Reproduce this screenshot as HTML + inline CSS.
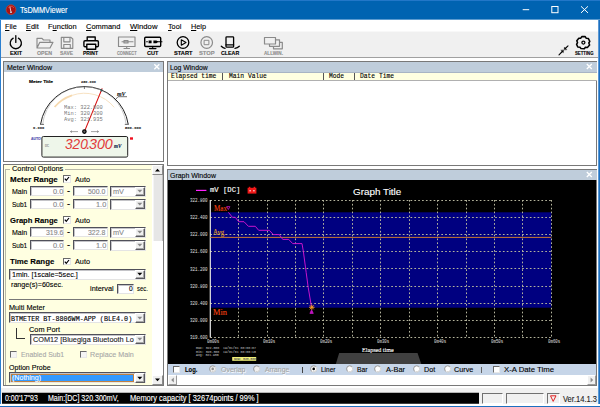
<!DOCTYPE html>
<html><head><meta charset="utf-8"><title>TsDMMViewer</title>
<style>
*{box-sizing:border-box;margin:0;padding:0}
html,body{width:600px;height:407px;overflow:hidden;background:#f0f0f0;font-family:"Liberation Sans",sans-serif;font-size:8px;color:#000}
.a{position:absolute}
.t{position:absolute;white-space:pre;transform-origin:0 50%;line-height:1;-webkit-text-stroke:0.12px currentColor}
.sunk{background:#fff;border:1px solid;border-color:#696969 #e3e3e3 #e3e3e3 #696969;box-shadow:inset 1px 1px 0 #a0a0a0}
.btn{background:#f0f0f0;border:1px solid;border-color:#fff #696969 #696969 #fff;box-shadow:inset -1px -1px 0 #a0a0a0}
svg{position:absolute;overflow:visible}
</style></head><body>
<div id="win" class="a" style="left:0;top:0;width:600px;height:407px;overflow:hidden">
<div class="a" style="left:0px;top:0px;width:600px;height:407px;background:#f0f0f0"></div>
<div class="a" style="left:0px;top:0px;width:600px;height:20px;background:#0063b1"></div>
<div class="a" style="left:0px;top:20px;width:600px;height:12px;background:#fff"></div>
<div class="a" style="left:0px;top:19px;width:600px;height:1px;background:#5c9bd0"></div>
<div class="a" style="left:0px;top:31px;width:600px;height:1px;background:#f8f8f8"></div>
<div class="a" style="left:0px;top:32px;width:600px;height:26px;background:#f0f0f0"></div>
<div class="a" style="left:0px;top:57px;width:600px;height:1px;background:#a0a0a0"></div>
<div class="a" style="left:0px;top:58px;width:600px;height:329.6px;background:#fff"></div>
<svg style="left:5px;top:4px" width="12" height="12" viewBox="5 4 12 12"><circle cx="11" cy="9.7" r="4.9" fill="#a81212" stroke="#c04838" stroke-width="0.7"/><path d="M8.3 7.5A3.6 3.6 0 0 1 13.9 7.8" stroke="#d84a40" stroke-width="1" fill="none"/><path d="M9.9 6.8L10.9 11.6" stroke="#f4d8d8" stroke-width="0.9" fill="none"/><circle cx="11" cy="12.2" r="0.9" fill="#c8e8f4"/></svg>
<div class="a" style="left:0px;top:0px;width:600px;height:1px;background:#2277c8"></div>
<svg style="left:515px;top:0" width="85" height="20" viewBox="0 0 85 20"><g stroke="#fff" stroke-width="1" fill="none"><path d="M7.7 9.7H14.2"/><rect x="36.8" y="6.5" width="6.2" height="6.2"/><path d="M66 6.3L73 12.9M73 6.3L66 12.9"/></g></svg>
<svg style="left:0;top:32px" width="600" height="26" viewBox="0 32 600 26" fill="none" stroke-linecap="round" stroke-linejoin="round">
<g stroke="#000" stroke-width="1.3">
<path d="M13.2 38.2A5.6 5.6 0 1 0 18.4 38.2M15.8 35.6V42.4"/>
</g>
<g stroke="#8a8a8a" stroke-width="1.15">
<path d="M37 48V38.3H42L43.5 40H50V42.3M37 48L39.8 42.3H53L50 48Z"/>
<path d="M61.3 37.3H71L72.8 39V48.3H61.3ZM63.8 37.3V41.8H70V37.3M63.8 48.3V44.5H70.3V48.3"/>
</g>
<g stroke="#000" stroke-width="1.4">
<path d="M87.2 40.8V37H95.2V40.8M86.8 46.8H85Q83.9 46.8 83.9 45.6V42Q83.9 40.8 85 40.8H97.3Q98.4 40.8 98.4 42V45.6Q98.4 46.8 97.3 46.8H95.7M86.8 44.3H95.7V49.3H86.8Z"/>
</g>
<g stroke="#8a8a8a" stroke-width="1.15">
<rect x="118.5" y="37" width="16.5" height="9.5"/><path d="M124 48.5H129.5M126.7 46.5V48.5M122 41.7H133M124 40.5H128V43H124Z"/>
</g>
<g stroke="#000" stroke-width="1.4">
<rect x="144.7" y="37.2" width="16" height="9.3" rx="1"/><path d="M149.5 48.6H156M152.7 46.5V48.6M157 41.8H162M146.6 41.8H147.4" stroke-width="1.1"/>
<path d="M148.6 40.4H151.6V43.2H148.6ZM153.4 40.4H156.4L158.2 41.8L156.4 43.2H153.4Z" fill="#000" stroke="none"/>
</g>
<g stroke="#000" stroke-width="1.3">
<circle cx="183" cy="42.5" r="5.8"/><path d="M181.3 39.8L186 42.5L181.3 45.2Z" stroke-width="1.1"/>
</g>
<g stroke="#8a8a8a" stroke-width="1.2">
<circle cx="206.7" cy="42.5" r="5.8"/><rect x="204.5" y="40.3" width="4.4" height="4.4" stroke-width="1"/>
</g>
<g stroke="#000" stroke-width="1.3">
<rect x="226" y="36.8" width="7.6" height="10.4" rx="0.8"/><path d="M226 44.8H233.6M221.3 46.3Q223 48 225 48.3M239.3 46.3Q237.5 48 235 48.3"/>
</g>
<g stroke="#8a8a8a" stroke-width="1.2">
<path d="M264.5 37.5H275.5V44H264.5ZM275.5 39.8H279.5V46.3H269.5V44M279.5 42.3H282.3V48.8H273.5V46.3"/>
</g>
<g stroke="#000" stroke-width="1.55">
<path d="M581.8 36.6L585.2 36.6L586.3 38.3L588.4 38.6L589.8 41.4L588.8 43L589.6 45L587.4 47.4L585.4 47.3L584.3 48.7L581 48.6L580 47.2L577.8 47L576.6 44.4L577.5 42.6L576.8 40.7L578.8 38.3L580.8 38.2Z"/>
<circle cx="583.4" cy="42.6" r="1.5" stroke-width="1.3"/>
</g>
<g stroke="#000" stroke-width="1">
<path d="M559 54.8L562.3 51.5M568 45.8L565.3 48.5" stroke-width="1.1"/><path d="M563.5 50.3L563.3 52.7L561.1 50.5ZM564.2 49.6L564.4 47.2L566.6 49.4Z" fill="#000" stroke-width="0.4"/>
</g>
</svg>
<div class="a" style="left:0px;top:20px;width:1px;height:387px;background:#2b7fd0"></div>
<div class="a" style="left:598px;top:20px;width:1px;height:387px;background:#5a98d4"></div>
<div class="a" style="left:599px;top:20px;width:1px;height:387px;background:#1c6fc0"></div>
<div class="a" style="left:0px;top:404px;width:600px;height:1.6px;background:#fff"></div>
<div class="a" style="left:0px;top:405.6px;width:600px;height:1.4px;background:#1c6fc0"></div>
<div class="a" style="left:3px;top:61px;width:161px;height:101px;background:#fff;border:1px solid #787878"></div>
<div class="a" style="left:4px;top:62px;width:159px;height:10px;background:#bfcddb"></div>
<svg style="left:153px;top:63px" width="8" height="8" viewBox="0 0 8 8"><path d="M1.3 1.3L6.3 6.3M6.3 1.3L1.3 6.3" stroke="#fff" stroke-width="1.3"/></svg>
<svg style="left:0;top:72px" width="164" height="90" viewBox="0 72 164 90" fill="none">
<path d="M40.6 124.2A44.3 44.3 0 0 1 128.2 124.2" stroke="#222" stroke-width="1"/>
<path d="M42.6 124.6A42 42 0 0 1 126.2 124.6" stroke="#999" stroke-width="0.5"/>
<path d="M40 124.4H44M124.8 124.4H128.8M84.4 86V89" stroke="#333" stroke-width="0.7"/>
<path d="M54.6 107A38.3 38.3 0 0 1 72 95.4" stroke="#f6d9ae" stroke-width="1.8"/>
<path d="M72 95.4A38.3 38.3 0 0 1 114.2 107.3" stroke="#f8e2c2" stroke-width="1"/>
<path d="M116 99L118 96.7H127" stroke="#333" stroke-width="0.7"/>
<path d="M84.4 131.6L102.2 88.4" stroke="#d81010" stroke-width="1.1"/>
<path d="M100.9 91.6L101.9 89.2" stroke="#206060" stroke-width="1.2"/>
<circle cx="84.4" cy="131.6" r="1.7" stroke="#000" stroke-width="1.2" fill="#666"/>
<path d="M70.5 131.6H78M70.5 131.6L72 130.6M70.5 131.6L72 132.6M91 131.6H98.5M98.5 131.6L97 130.6M98.5 131.6L97 132.6" stroke="#666" stroke-width="0.6"/>
<rect x="41.9" y="136.5" width="85.8" height="20.6" rx="1.5" fill="#eef6ea" stroke="#222" stroke-width="1"/>
<rect x="130" y="137.3" width="3" height="2.4" fill="#f01020"/>
</svg>
<div class="a" style="left:3px;top:164px;width:161px;height:222px;background:#ffffe1;border:1px solid #787878"></div>
<div class="a" style="left:152px;top:165px;width:11px;height:220px;background:#fff"></div>
<div class="a" style="left:152.5px;top:175px;width:10.5px;height:66px;background:#e6e6e6;border-right:1px solid #c0c0c0;border-left:1px solid #f4f4f4"></div>
<div class="a" style="left:152px;top:165px;width:11px;height:10px;background:#f0f0f0;border:1px solid;border-color:#fff #8a8a8a #8a8a8a #fff"></div>
<div class="a" style="left:152px;top:375px;width:11px;height:10px;background:#f0f0f0;border:1px solid;border-color:#fff #8a8a8a #8a8a8a #fff"></div>
<svg style="left:152px;top:165px" width="11" height="220" viewBox="0 0 11 220"><path d="M3 6.5L5.5 3.8L8 6.5Z M3 213.5L5.5 216.2L8 213.5Z" fill="#000"/></svg>
<div class="a" style="left:4.5px;top:168.5px;width:146.5px;height:216px;border:1px solid #b8b8a8;border-right:none;border-bottom:none;background:none"></div>
<div class="a" style="left:10px;top:166px;width:55px;height:6px;background:#ffffe1"></div>
<div class="a" style="left:63.3px;top:175.3px;width:7.5px;height:7.5px;background:#fff;border:1px solid;border-color:#696969 #e8e8e8 #e8e8e8 #696969"></div>
<svg style="left:63.3px;top:175.3px" width="8" height="8" viewBox="0 0 8 8"><path d="M1.8 3.6L3.3 5.4L6 2" stroke="#000" stroke-width="1.2" fill="none"/></svg>
<div class="a" style="left:30px;top:186.2px;width:34px;height:9.6px;background:#fff;border:1px solid;border-color:#50505a #e4e4e4 #e4e4e4 #50505a;box-shadow:inset 1px 1px 0 #c4c4c8"></div>
<div class="a" style="left:73px;top:186.2px;width:34.5px;height:9.6px;background:#fff;border:1px solid;border-color:#50505a #e4e4e4 #e4e4e4 #50505a;box-shadow:inset 1px 1px 0 #c4c4c8"></div>
<div class="a" style="left:110px;top:185.8px;width:35.9px;height:11px;background:#fff;border:1px solid;border-color:#50505a #e4e4e4 #e4e4e4 #50505a;box-shadow:inset 1px 1px 0 #c4c4c8"></div>
<div class="a" style="left:134.7px;top:186.8px;width:10.6px;height:9.6px;background:#f0f0f0;border:1px solid;border-color:#fff #58585e #58585e #fff;box-shadow:inset -1px -1px 0 #a8a8a8"></div>
<svg style="left:134.9px;top:187.3px" width="10" height="8" viewBox="0 0 10 8"><path d="M2.3 2.8H7.3L4.8 5.6Z" fill="#888"/></svg>
<div class="a" style="left:30px;top:199.1px;width:34px;height:9.6px;background:#fff;border:1px solid;border-color:#50505a #e4e4e4 #e4e4e4 #50505a;box-shadow:inset 1px 1px 0 #c4c4c8"></div>
<div class="a" style="left:73px;top:199.1px;width:34.5px;height:9.6px;background:#fff;border:1px solid;border-color:#50505a #e4e4e4 #e4e4e4 #50505a;box-shadow:inset 1px 1px 0 #c4c4c8"></div>
<div class="a" style="left:110px;top:198.7px;width:35.9px;height:11px;background:#fff;border:1px solid;border-color:#50505a #e4e4e4 #e4e4e4 #50505a;box-shadow:inset 1px 1px 0 #c4c4c8"></div>
<div class="a" style="left:134.7px;top:199.7px;width:10.6px;height:9.6px;background:#f0f0f0;border:1px solid;border-color:#fff #58585e #58585e #fff;box-shadow:inset -1px -1px 0 #a8a8a8"></div>
<svg style="left:134.9px;top:200.2px" width="10" height="8" viewBox="0 0 10 8"><path d="M2.3 2.8H7.3L4.8 5.6Z" fill="#888"/></svg>
<div class="a" style="left:63.3px;top:216.3px;width:7.5px;height:7.5px;background:#fff;border:1px solid;border-color:#696969 #e8e8e8 #e8e8e8 #696969"></div>
<svg style="left:63.3px;top:216.3px" width="8" height="8" viewBox="0 0 8 8"><path d="M1.8 3.6L3.3 5.4L6 2" stroke="#000" stroke-width="1.2" fill="none"/></svg>
<div class="a" style="left:30px;top:227.2px;width:34px;height:9.6px;background:#fff;border:1px solid;border-color:#50505a #e4e4e4 #e4e4e4 #50505a;box-shadow:inset 1px 1px 0 #c4c4c8"></div>
<div class="a" style="left:73px;top:227.2px;width:34.5px;height:9.6px;background:#fff;border:1px solid;border-color:#50505a #e4e4e4 #e4e4e4 #50505a;box-shadow:inset 1px 1px 0 #c4c4c8"></div>
<div class="a" style="left:110px;top:226.8px;width:35.9px;height:11px;background:#fff;border:1px solid;border-color:#50505a #e4e4e4 #e4e4e4 #50505a;box-shadow:inset 1px 1px 0 #c4c4c8"></div>
<div class="a" style="left:134.7px;top:227.8px;width:10.6px;height:9.6px;background:#f0f0f0;border:1px solid;border-color:#fff #58585e #58585e #fff;box-shadow:inset -1px -1px 0 #a8a8a8"></div>
<svg style="left:134.9px;top:228.3px" width="10" height="8" viewBox="0 0 10 8"><path d="M2.3 2.8H7.3L4.8 5.6Z" fill="#888"/></svg>
<div class="a" style="left:30px;top:240.1px;width:34px;height:9.6px;background:#fff;border:1px solid;border-color:#50505a #e4e4e4 #e4e4e4 #50505a;box-shadow:inset 1px 1px 0 #c4c4c8"></div>
<div class="a" style="left:73px;top:240.1px;width:34.5px;height:9.6px;background:#fff;border:1px solid;border-color:#50505a #e4e4e4 #e4e4e4 #50505a;box-shadow:inset 1px 1px 0 #c4c4c8"></div>
<div class="a" style="left:110px;top:239.7px;width:35.9px;height:11px;background:#fff;border:1px solid;border-color:#50505a #e4e4e4 #e4e4e4 #50505a;box-shadow:inset 1px 1px 0 #c4c4c8"></div>
<div class="a" style="left:134.7px;top:240.7px;width:10.6px;height:9.6px;background:#f0f0f0;border:1px solid;border-color:#fff #58585e #58585e #fff;box-shadow:inset -1px -1px 0 #a8a8a8"></div>
<svg style="left:134.9px;top:241.2px" width="10" height="8" viewBox="0 0 10 8"><path d="M2.3 2.8H7.3L4.8 5.6Z" fill="#888"/></svg>
<div class="a" style="left:63.3px;top:257.5px;width:7.5px;height:7.5px;background:#fff;border:1px solid;border-color:#696969 #e8e8e8 #e8e8e8 #696969"></div>
<svg style="left:63.3px;top:257.5px" width="8" height="8" viewBox="0 0 8 8"><path d="M1.8 3.6L3.3 5.4L6 2" stroke="#000" stroke-width="1.2" fill="none"/></svg>
<div class="a" style="left:9px;top:268.5px;width:136.9px;height:11px;background:#fff;border:1px solid;border-color:#50505a #e4e4e4 #e4e4e4 #50505a;box-shadow:inset 1px 1px 0 #c4c4c8"></div>
<div class="a" style="left:134.7px;top:269.5px;width:10.6px;height:9.6px;background:#f0f0f0;border:1px solid;border-color:#fff #58585e #58585e #fff;box-shadow:inset -1px -1px 0 #a8a8a8"></div>
<svg style="left:134.9px;top:270px" width="10" height="8" viewBox="0 0 10 8"><path d="M2.3 2.8H7.3L4.8 5.6Z" fill="#000"/></svg>
<div class="a" style="left:116.7px;top:283.5px;width:17.5px;height:10px;background:#fff;border:1px solid;border-color:#50505a #e4e4e4 #e4e4e4 #50505a;box-shadow:inset 1px 1px 0 #c4c4c8"></div>
<div class="a" style="left:9px;top:299px;width:138px;height:1px;background:#777"></div>
<div class="a" style="left:9px;top:312.3px;width:136.9px;height:11px;background:#fff;border:1px solid;border-color:#50505a #e4e4e4 #e4e4e4 #50505a;box-shadow:inset 1px 1px 0 #c4c4c8"></div>
<div class="a" style="left:134.7px;top:313.3px;width:10.6px;height:9.6px;background:#f0f0f0;border:1px solid;border-color:#fff #58585e #58585e #fff;box-shadow:inset -1px -1px 0 #a8a8a8"></div>
<svg style="left:134.9px;top:313.8px" width="10" height="8" viewBox="0 0 10 8"><path d="M2.3 2.8H7.3L4.8 5.6Z" fill="#888"/></svg>
<div class="a" style="left:16px;top:327.5px;width:1px;height:11.5px;background:#333"></div>
<div class="a" style="left:16px;top:338.3px;width:8.5px;height:1px;background:#333"></div>
<div class="a" style="left:30px;top:333.5px;width:115.9px;height:11px;background:#fff;border:1px solid;border-color:#50505a #e4e4e4 #e4e4e4 #50505a;box-shadow:inset 1px 1px 0 #c4c4c8"></div>
<div class="a" style="left:134.7px;top:334.5px;width:10.6px;height:9.6px;background:#f0f0f0;border:1px solid;border-color:#fff #58585e #58585e #fff;box-shadow:inset -1px -1px 0 #a8a8a8"></div>
<svg style="left:134.9px;top:335px" width="10" height="8" viewBox="0 0 10 8"><path d="M2.3 2.8H7.3L4.8 5.6Z" fill="#888"/></svg>
<div class="a" style="left:9.7px;top:350.5px;width:7.5px;height:7.5px;background:#f4f4f4;border:1px solid;border-color:#696969 #e8e8e8 #e8e8e8 #696969"></div>
<div class="a" style="left:79.7px;top:350.5px;width:7.5px;height:7.5px;background:#f4f4f4;border:1px solid;border-color:#696969 #e8e8e8 #e8e8e8 #696969"></div>
<div class="a" style="left:9px;top:372.3px;width:136.9px;height:11px;background:#fff;border:1px solid;border-color:#50505a #e4e4e4 #e4e4e4 #50505a;box-shadow:inset 1px 1px 0 #c4c4c8"></div>
<div class="a" style="left:134.7px;top:373.3px;width:10.6px;height:9.6px;background:#f0f0f0;border:1px solid;border-color:#fff #58585e #58585e #fff;box-shadow:inset -1px -1px 0 #a8a8a8"></div>
<svg style="left:134.9px;top:373.8px" width="10" height="8" viewBox="0 0 10 8"><path d="M2.3 2.8H7.3L4.8 5.6Z" fill="#000"/></svg>
<div class="a" style="left:10.5px;top:374px;width:123px;height:7.5px;background:#3399ff;border:1px solid #c08040"></div>
<div class="a" style="left:166.5px;top:61px;width:430.5px;height:105px;background:#fff;border:1px solid #787878"></div>
<div class="a" style="left:167.5px;top:62px;width:429px;height:10px;background:#bfcddb"></div>
<svg style="left:586px;top:63px" width="8" height="8" viewBox="0 0 8 8"><path d="M0.8 1L5.8 6M5.8 1L0.8 6" stroke="#fff" stroke-width="1.3"/></svg>
<div class="a" style="left:167.5px;top:72px;width:429px;height:8.6px;background:#ffffe1;border-bottom:1px solid #b0b0b0;border-top:1px solid #a8b4c4"></div>
<div class="a" style="left:222.3px;top:72.5px;width:1px;height:7px;background:#555"></div>
<div class="a" style="left:322.8px;top:72.5px;width:1px;height:7px;background:#555"></div>
<div class="a" style="left:354.3px;top:72.5px;width:1px;height:7px;background:#555"></div>
<div class="a" style="left:166.5px;top:168.5px;width:430.5px;height:217.5px;background:#fff;border:1px solid #787878"></div>
<div class="a" style="left:167.5px;top:169.5px;width:429px;height:10.3px;background:#bfcddb"></div>
<svg style="left:586px;top:171px" width="8" height="8" viewBox="0 0 8 8"><path d="M0.8 1L5.8 6M5.8 1L0.8 6" stroke="#fff" stroke-width="1.3"/></svg>
<div class="a" style="left:167.5px;top:179.8px;width:428px;height:184.2px;background:#000"></div>
<svg style="left:167px;top:179px" width="429" height="186" viewBox="167 179 429 186" fill="none"><rect x="210.3" y="212.3" width="341.04" height="95.4" fill="#000080"/><path d="M238.5 200 V337.6M267.5 200 V337.6M295.5 200 V337.6M323.5 200 V337.6M352.5 200 V337.6M380.5 200 V337.6M409.5 200 V337.6M437.5 200 V337.6M466.5 200 V337.6M494.5 200 V337.6M522.5 200 V337.6M551.5 200 V337.6M210.3 200.5 H551.3M210.3 217.5 H551.3M210.3 234.5 H551.3M210.3 251.5 H551.3M210.3 268.5 H551.3M210.3 286.5 H551.3M210.3 303.5 H551.3M210.3 320.5 H551.3M210.3 337.5 H551.3" stroke="#b4b49c" stroke-width="1" stroke-dasharray="1.7 2.15"/><path d="M210.3 200 V337.6" stroke="#e8e8e8" stroke-width="1.2"/><path d="M210.3 237.4 H551.3" stroke="#c87830" stroke-width="1"/><path d="M228.4 212.3 L232.4 217.3 L235.3 217.3 L238.7 221.7 L244 221.7 L248.4 226.3 L255.3 226.3 L258.7 230.3 L269.3 230.3 L273.3 234.6 L279.3 234.6 L282.7 239.4 L288.7 239.4 L292.7 243.6 L302 243.6 L303.4 251.7 L306.2 272.7 L308.2 287.3 L311.4 306.5" stroke="#c814cc" stroke-width="1"/><path d="M196 190.4H206.4" stroke="#ff20ff" stroke-width="1.2"/><rect x="247.6" y="187.8" width="8.8" height="5.8" fill="#f01818"/><rect x="248.8" y="186.8" width="1.6" height="1.2" fill="#f01818"/><rect x="253.6" y="186.8" width="1.6" height="1.2" fill="#f01818"/><path d="M249.3 190.8H251M253 190.8H254.8" stroke="#fff" stroke-width="0.9"/><path d="M226.7 206.6H229.9L228.3 209.5Z" stroke="#e018e0" stroke-width="0.7"/><path d="M309.8 305.3L313.8 309.3M313.8 305.3L309.8 309.3M309 307.3H314.6M311.8 304.6V310" stroke="#ffa020" stroke-width="0.9"/><path d="M311.6 309.8L309.9 313.4H313.3Z" stroke="#d018d0" stroke-width="0.7" fill="#c010c0"/><path d="M335.8 364L339.2 353H417.5L421.3 364Z" fill="#404040"/><rect x="232.2" y="357" width="24" height="3.8" fill="#f0f078"/></svg>
<div class="a" style="left:167.5px;top:364px;width:428px;height:10.7px;background:#c6d5e8"></div>
<div class="a" style="left:172.7px;top:365.5px;width:7.5px;height:7.5px;background:#fff;border:1px solid;border-color:#696969 #e8e8e8 #e8e8e8 #696969"></div>
<svg style="left:209.3px;top:365.3px" width="8" height="8" viewBox="0 0 8 8"><circle cx="3.7" cy="3.9" r="3.1" fill="#f0f0f0" stroke="#8a8a8a" stroke-width="0.9"/><path d="M1.5 6.1A3.1 3.1 0 0 0 5.9 1.7" stroke="#f4f4f4" stroke-width="0.9" fill="none"/><circle cx="3.7" cy="3.9" r="1.3" fill="#909090"/></svg>
<svg style="left:253px;top:365.3px" width="8" height="8" viewBox="0 0 8 8"><circle cx="3.7" cy="3.9" r="3.1" fill="#f0f0f0" stroke="#8a8a8a" stroke-width="0.9"/><path d="M1.5 6.1A3.1 3.1 0 0 0 5.9 1.7" stroke="#f4f4f4" stroke-width="0.9" fill="none"/></svg>
<div class="a" style="left:302px;top:366.5px;width:1px;height:6px;background:#444"></div>
<svg style="left:310px;top:365.3px" width="8" height="8" viewBox="0 0 8 8"><circle cx="3.7" cy="3.9" r="3.1" fill="#fff" stroke="#8a8a8a" stroke-width="0.9"/><path d="M1.5 6.1A3.1 3.1 0 0 0 5.9 1.7" stroke="#f4f4f4" stroke-width="0.9" fill="none"/><circle cx="3.7" cy="3.9" r="1.3" fill="#000"/></svg>
<svg style="left:346px;top:365.3px" width="8" height="8" viewBox="0 0 8 8"><circle cx="3.7" cy="3.9" r="3.1" fill="#fff" stroke="#8a8a8a" stroke-width="0.9"/><path d="M1.5 6.1A3.1 3.1 0 0 0 5.9 1.7" stroke="#f4f4f4" stroke-width="0.9" fill="none"/></svg>
<svg style="left:374.3px;top:365.3px" width="8" height="8" viewBox="0 0 8 8"><circle cx="3.7" cy="3.9" r="3.1" fill="#fff" stroke="#8a8a8a" stroke-width="0.9"/><path d="M1.5 6.1A3.1 3.1 0 0 0 5.9 1.7" stroke="#f4f4f4" stroke-width="0.9" fill="none"/></svg>
<svg style="left:413px;top:365.3px" width="8" height="8" viewBox="0 0 8 8"><circle cx="3.7" cy="3.9" r="3.1" fill="#fff" stroke="#8a8a8a" stroke-width="0.9"/><path d="M1.5 6.1A3.1 3.1 0 0 0 5.9 1.7" stroke="#f4f4f4" stroke-width="0.9" fill="none"/></svg>
<svg style="left:443.7px;top:365.3px" width="8" height="8" viewBox="0 0 8 8"><circle cx="3.7" cy="3.9" r="3.1" fill="#fff" stroke="#8a8a8a" stroke-width="0.9"/><path d="M1.5 6.1A3.1 3.1 0 0 0 5.9 1.7" stroke="#f4f4f4" stroke-width="0.9" fill="none"/></svg>
<div class="a" style="left:481px;top:366.5px;width:1px;height:6px;background:#666"></div>
<div class="a" style="left:492.5px;top:365.5px;width:7.5px;height:7.5px;background:#fff;border:1px solid;border-color:#696969 #e8e8e8 #e8e8e8 #696969"></div>
<div class="a" style="left:167.5px;top:374.7px;width:428px;height:10px;background:#fff"></div>
<div class="a" style="left:167.5px;top:374.7px;width:9px;height:10px;background:#f0f0f0;border:1px solid;border-color:#fff #9a9a9a #9a9a9a #fff"></div>
<div class="a" style="left:586.5px;top:374.7px;width:9px;height:10px;background:#f0f0f0;border:1px solid;border-color:#fff #9a9a9a #9a9a9a #fff"></div>
<svg style="left:167.5px;top:374.7px" width="428" height="10" viewBox="0 0 428 10"><path d="M5.8 2.6L3.2 5L5.8 7.4Z M422.6 2.6L425.2 5L422.6 7.4Z" fill="#8a8a8a"/></svg>
<div class="a" style="left:1.5px;top:393px;width:477.5px;height:10px;background:#000"></div>
<div class="a" style="left:1.5px;top:392px;width:477.5px;height:1px;background:rgba(0,0,0,.25)"></div>
<div class="a" style="left:1.5px;top:403px;width:477.5px;height:1px;background:rgba(0,0,0,.75)"></div>
<div class="a" style="left:481.7px;top:393px;width:21px;height:11px;background:#f0f0f0;border:1px solid;border-color:#707070 #fff #fff #707070"></div>
<div class="a" style="left:506px;top:393px;width:38px;height:11px;background:#f0f0f0;border:1px solid;border-color:#707070 #fff #fff #707070"></div>
<div class="a" style="left:546.7px;top:393px;width:13px;height:11px;background:#f0f0f0;border:1px solid;border-color:#707070 #fff #fff #707070"></div>
<svg style="left:549px;top:394px" width="9" height="9" viewBox="0 0 9 9"><path d="M1.5 1.8H7L4.2 7.4Z" stroke="#e02020" stroke-width="1" fill="none"/></svg>
<span class="t" id="t0" style="left:19.70px;top:5.90px;font-size:8.7px;color:#fff;font-family:'Liberation Sans',sans-serif;transform:scaleX(0.8524);">TsDMMViewer</span>
<span class="t" id="t1" style="left:5.30px;top:22.81px;font-size:8px;color:#000;font-family:'Liberation Sans',sans-serif;transform:scaleX(0.9065);"><u>F</u>ile</span>
<span class="t" id="t2" style="left:26.00px;top:22.81px;font-size:8px;color:#000;font-family:'Liberation Sans',sans-serif;transform:scaleX(0.9205);"><u>E</u>dit</span>
<span class="t" id="t3" style="left:48.00px;top:22.81px;font-size:8px;color:#000;font-family:'Liberation Sans',sans-serif;transform:scaleX(0.9348);">F<u>u</u>nction</span>
<span class="t" id="t4" style="left:86.30px;top:22.81px;font-size:8px;color:#000;font-family:'Liberation Sans',sans-serif;transform:scaleX(0.9321);"><u>C</u>ommand</span>
<span class="t" id="t5" style="left:130.00px;top:22.81px;font-size:8px;color:#000;font-family:'Liberation Sans',sans-serif;transform:scaleX(0.9660);"><u>W</u>indow</span>
<span class="t" id="t6" style="left:168.00px;top:22.81px;font-size:8px;color:#000;font-family:'Liberation Sans',sans-serif;transform:scaleX(0.9055);"><u>T</u>ool</span>
<span class="t" id="t7" style="left:191.30px;top:22.81px;font-size:8px;color:#000;font-family:'Liberation Sans',sans-serif;transform:scaleX(0.9108);"><u>H</u>elp</span>
<span class="t" id="t8" style="left:10.00px;top:51.11px;font-size:5.7px;color:#000;font-family:'Liberation Sans',sans-serif;font-weight:bold;transform:scaleX(0.9481);">EXIT</span>
<span class="t" id="t9" style="left:36.70px;top:51.11px;font-size:5.7px;color:#8e8e8e;font-family:'Liberation Sans',sans-serif;font-weight:bold;transform:scaleX(0.9302);">OPEN</span>
<span class="t" id="t10" style="left:60.00px;top:51.11px;font-size:5.7px;color:#8e8e8e;font-family:'Liberation Sans',sans-serif;font-weight:bold;transform:scaleX(0.8622);">SAVE</span>
<span class="t" id="t11" style="left:83.00px;top:51.11px;font-size:5.7px;color:#000;font-family:'Liberation Sans',sans-serif;font-weight:bold;transform:scaleX(0.8791);">PRINT</span>
<span class="t" id="t12" style="left:116.70px;top:51.11px;font-size:5.7px;color:#8e8e8e;font-family:'Liberation Sans',sans-serif;font-weight:bold;transform:scaleX(0.6969);">CONNECT</span>
<span class="t" id="t13" style="left:147.00px;top:51.11px;font-size:5.7px;color:#000;font-family:'Liberation Sans',sans-serif;font-weight:bold;transform:scaleX(0.9656);">CUT</span>
<span class="t" id="t14" style="left:174.00px;top:51.11px;font-size:5.7px;color:#000;font-family:'Liberation Sans',sans-serif;font-weight:bold;transform:scaleX(0.9975);">START</span>
<span class="t" id="t15" style="left:199.00px;top:51.11px;font-size:5.7px;color:#8e8e8e;font-family:'Liberation Sans',sans-serif;font-weight:bold;transform:scaleX(1.0201);">STOP</span>
<span class="t" id="t16" style="left:220.80px;top:51.11px;font-size:5.7px;color:#000;font-family:'Liberation Sans',sans-serif;font-weight:bold;transform:scaleX(0.9289);">CLEAR</span>
<span class="t" id="t17" style="left:264.00px;top:51.11px;font-size:5.7px;color:#8e8e8e;font-family:'Liberation Sans',sans-serif;font-weight:bold;transform:scaleX(0.8123);">ALLWIN.</span>
<span class="t" id="t18" style="left:574.50px;top:51.11px;font-size:5.7px;color:#000;font-family:'Liberation Sans',sans-serif;font-weight:bold;transform:scaleX(0.7503);">SETTING</span>
<span class="t" id="t19" style="left:6.70px;top:64.01px;font-size:8px;color:#000;font-family:'Liberation Sans',sans-serif;transform:scaleX(0.8802);">Meter Window</span>
<span class="t" id="t20" style="left:29.00px;top:80.80px;font-size:3.6px;color:#000;font-family:'Liberation Sans',sans-serif;font-weight:bold;transform:scaleX(1.3391);">Meter Title</span>
<span class="t" id="t21" style="left:81.00px;top:81.01px;font-size:3.8px;color:#333;font-family:'Liberation Mono',monospace;font-weight:bold;transform:scaleX(0.9403);">250.000</span>
<span class="t" id="t22" style="left:33.00px;top:127.01px;font-size:3.8px;color:#333;font-family:'Liberation Mono',monospace;font-weight:bold;transform:scaleX(0.9995);">0.000</span>
<span class="t" id="t23" style="left:125.00px;top:127.01px;font-size:3.8px;color:#333;font-family:'Liberation Mono',monospace;font-weight:bold;transform:scaleX(1.0029);">500.000</span>
<span class="t" id="t24" style="left:117.40px;top:91.71px;font-size:5.6px;color:#222;font-family:'Liberation Serif',serif;font-weight:bold;font-style:italic;transform:scaleX(1.0625);">mV</span>
<span class="t" id="t25" style="left:64.20px;top:104.92px;font-size:5.7px;color:#787878;font-family:'Liberation Mono',monospace;transform:scaleX(0.9471);-webkit-text-stroke:0;">Max: 322.800</span>
<span class="t" id="t26" style="left:64.20px;top:111.11px;font-size:5.7px;color:#787878;font-family:'Liberation Mono',monospace;transform:scaleX(0.9471);-webkit-text-stroke:0;">Min: 320.300</span>
<span class="t" id="t27" style="left:64.20px;top:117.11px;font-size:5.7px;color:#787878;font-family:'Liberation Mono',monospace;transform:scaleX(0.9471);-webkit-text-stroke:0;">Avg: 321.935</span>
<span class="t" id="t28" style="left:31.00px;top:137.51px;font-size:3.4px;color:#5050b0;font-family:'Liberation Sans',sans-serif;font-weight:bold;transform:scaleX(1.0056);">AUTO</span>
<span class="t" id="t29" style="left:44.60px;top:144.51px;font-size:3px;color:#888;font-family:'Liberation Sans',sans-serif;transform:scaleX(0.9209);">DC</span>
<span class="t" id="t30" style="left:114.00px;top:144.22px;font-size:5.2px;color:#10204a;font-family:'Liberation Serif',serif;font-weight:bold;font-style:italic;transform:scaleX(0.9867);">mV</span>
<span class="t" id="t31" style="left:64.60px;top:136.21px;font-size:15.4px;color:#e23a3a;font-family:'Liberation Sans',sans-serif;font-style:italic;transform:scaleX(0.8876);-webkit-text-stroke:0;">320</span>
<span class="t" id="t32" style="left:86.20px;top:136.21px;font-size:15.4px;color:#e23a3a;font-family:'Liberation Sans',sans-serif;font-style:italic;-webkit-text-stroke:0;">.</span>
<span class="t" id="t33" style="left:89.10px;top:136.21px;font-size:15.4px;color:#e23a3a;font-family:'Liberation Sans',sans-serif;font-style:italic;transform:scaleX(0.9265);-webkit-text-stroke:0;">300</span>
<span class="t" id="t34" style="left:12.00px;top:164.81px;font-size:8px;color:#000;font-family:'Liberation Sans',sans-serif;transform:scaleX(0.9228);">Control Options</span>
<span class="t" id="t35" style="left:9.70px;top:175.81px;font-size:8px;color:#000;font-family:'Liberation Sans',sans-serif;font-weight:bold;transform:scaleX(0.9955);">Meter Range</span>
<span class="t" id="t36" style="left:75.00px;top:175.81px;font-size:8px;color:#000;font-family:'Liberation Sans',sans-serif;transform:scaleX(0.9108);">Auto</span>
<span class="t" id="t37" style="left:11.50px;top:187.90px;font-size:8px;color:#000;font-family:'Liberation Sans',sans-serif;transform:scaleX(0.8764);">Main</span>
<span class="t" id="t38" style="left:52.75px;top:187.90px;font-size:7.6px;color:#888;font-family:'Liberation Sans',sans-serif;transform:scaleX(0.9704);">0.0</span>
<span class="t" id="t39" style="left:88.45px;top:187.90px;font-size:7.6px;color:#888;font-family:'Liberation Sans',sans-serif;transform:scaleX(0.9124);">500.0</span>
<span class="t" id="t40" style="left:66.50px;top:187.10px;font-size:8px;color:#000;font-family:'Liberation Sans',sans-serif;font-weight:bold;transform:scaleX(1.1602);">-</span>
<span class="t" id="t41" style="left:113.00px;top:187.90px;font-size:8px;color:#888;font-family:'Liberation Sans',sans-serif;transform:scaleX(0.9167);">mV</span>
<span class="t" id="t42" style="left:11.50px;top:200.81px;font-size:8px;color:#000;font-family:'Liberation Sans',sans-serif;transform:scaleX(0.8134);">Sub1</span>
<span class="t" id="t43" style="left:52.75px;top:200.81px;font-size:7.6px;color:#888;font-family:'Liberation Sans',sans-serif;transform:scaleX(0.9704);">0.0</span>
<span class="t" id="t44" style="left:95.55px;top:200.81px;font-size:7.6px;color:#888;font-family:'Liberation Sans',sans-serif;transform:scaleX(0.9704);">1.0</span>
<span class="t" id="t45" style="left:66.50px;top:200.01px;font-size:8px;color:#000;font-family:'Liberation Sans',sans-serif;font-weight:bold;transform:scaleX(1.1602);">-</span>
<span class="t" id="t46" style="left:9.70px;top:216.81px;font-size:8px;color:#000;font-family:'Liberation Sans',sans-serif;font-weight:bold;transform:scaleX(0.9515);">Graph Range</span>
<span class="t" id="t47" style="left:75.00px;top:216.81px;font-size:8px;color:#000;font-family:'Liberation Sans',sans-serif;transform:scaleX(0.9108);">Auto</span>
<span class="t" id="t48" style="left:11.50px;top:228.90px;font-size:8px;color:#000;font-family:'Liberation Sans',sans-serif;transform:scaleX(0.8764);">Main</span>
<span class="t" id="t49" style="left:45.65px;top:228.90px;font-size:7.6px;color:#888;font-family:'Liberation Sans',sans-serif;transform:scaleX(0.9124);">319.6</span>
<span class="t" id="t50" style="left:88.45px;top:228.90px;font-size:7.6px;color:#888;font-family:'Liberation Sans',sans-serif;transform:scaleX(0.9124);">322.8</span>
<span class="t" id="t51" style="left:66.50px;top:228.10px;font-size:8px;color:#000;font-family:'Liberation Sans',sans-serif;font-weight:bold;transform:scaleX(1.1602);">-</span>
<span class="t" id="t52" style="left:113.00px;top:228.90px;font-size:8px;color:#888;font-family:'Liberation Sans',sans-serif;transform:scaleX(0.9167);">mV</span>
<span class="t" id="t53" style="left:11.50px;top:241.81px;font-size:8px;color:#000;font-family:'Liberation Sans',sans-serif;transform:scaleX(0.8134);">Sub1</span>
<span class="t" id="t54" style="left:52.75px;top:241.81px;font-size:7.6px;color:#888;font-family:'Liberation Sans',sans-serif;transform:scaleX(0.9704);">0.0</span>
<span class="t" id="t55" style="left:95.55px;top:241.81px;font-size:7.6px;color:#888;font-family:'Liberation Sans',sans-serif;transform:scaleX(0.9704);">1.0</span>
<span class="t" id="t56" style="left:66.50px;top:241.01px;font-size:8px;color:#000;font-family:'Liberation Sans',sans-serif;font-weight:bold;transform:scaleX(1.1602);">-</span>
<span class="t" id="t57" style="left:9.70px;top:258.01px;font-size:8px;color:#000;font-family:'Liberation Sans',sans-serif;font-weight:bold;transform:scaleX(0.9800);">Time Range</span>
<span class="t" id="t58" style="left:75.00px;top:258.01px;font-size:8px;color:#000;font-family:'Liberation Sans',sans-serif;transform:scaleX(0.9108);">Auto</span>
<span class="t" id="t59" style="left:11.70px;top:270.81px;font-size:8px;color:#000;font-family:'Liberation Sans',sans-serif;transform:scaleX(0.8994);">1min. [1scale=5sec.]</span>
<span class="t" id="t60" style="left:11.30px;top:281.31px;font-size:8px;color:#000;font-family:'Liberation Sans',sans-serif;transform:scaleX(0.8961);">range(s)=60sec.</span>
<span class="t" id="t61" style="left:90.00px;top:285.01px;font-size:8px;color:#000;font-family:'Liberation Sans',sans-serif;transform:scaleX(0.9187);">interval</span>
<span class="t" id="t62" style="left:129.30px;top:285.01px;font-size:8px;color:#000;font-family:'Liberation Sans',sans-serif;transform:scaleX(0.8309);">0</span>
<span class="t" id="t63" style="left:136.70px;top:285.01px;font-size:8px;color:#000;font-family:'Liberation Sans',sans-serif;transform:scaleX(0.7361);">sec.</span>
<span class="t" id="t64" style="left:9.00px;top:304.01px;font-size:8px;color:#000;font-family:'Liberation Sans',sans-serif;transform:scaleX(0.9100);">Multi Meter</span>
<span class="t" id="t65" style="left:11.30px;top:315.91px;font-size:6.67px;color:#000;font-family:'Liberation Mono',monospace;transform:scaleX(1.0113);">BTMETER BT-8806WM-APP (BLE4.0)</span>
<span class="t" id="t66" style="left:29.00px;top:326.01px;font-size:8px;color:#000;font-family:'Liberation Sans',sans-serif;transform:scaleX(0.9172);">Com Port</span>
<span class="t" id="t67" style="left:32.50px;top:335.81px;font-size:8px;color:#222;font-family:'Liberation Sans',sans-serif;transform:scaleX(0.9139);">COM12 [Bluegiga Bluetooth Lo</span>
<span class="t" id="t68" style="left:20.80px;top:351.31px;font-size:8px;color:#a8a8a8;font-family:'Liberation Sans',sans-serif;transform:scaleX(0.8594);">Enabled Sub1</span>
<span class="t" id="t69" style="left:90.30px;top:351.31px;font-size:8px;color:#a8a8a8;font-family:'Liberation Sans',sans-serif;transform:scaleX(0.8933);">Replace Main</span>
<span class="t" id="t70" style="left:9.20px;top:363.71px;font-size:8px;color:#000;font-family:'Liberation Sans',sans-serif;transform:scaleX(0.8825);">Option Probe</span>
<span class="t" id="t71" style="left:11.70px;top:374.40px;font-size:8px;color:#fff;font-family:'Liberation Sans',sans-serif;transform:scaleX(0.8843);">(Nothing)</span>
<span class="t" id="t72" style="left:170.30px;top:64.01px;font-size:8px;color:#000;font-family:'Liberation Sans',sans-serif;transform:scaleX(0.8562);">Log Window</span>
<span class="t" id="t73" style="left:171.30px;top:74.20px;font-size:6.5px;color:#000;font-family:'Liberation Mono',monospace;transform:scaleX(0.9698);">Elapsed time</span>
<span class="t" id="t74" style="left:229.00px;top:74.20px;font-size:6.5px;color:#000;font-family:'Liberation Mono',monospace;transform:scaleX(0.9688);">Main Value</span>
<span class="t" id="t75" style="left:328.60px;top:74.20px;font-size:6.5px;color:#000;font-family:'Liberation Mono',monospace;transform:scaleX(0.9674);">Mode</span>
<span class="t" id="t76" style="left:360.00px;top:74.20px;font-size:6.5px;color:#000;font-family:'Liberation Mono',monospace;transform:scaleX(0.9684);">Date Time</span>
<span class="t" id="t77" style="left:169.60px;top:171.81px;font-size:8px;color:#000;font-family:'Liberation Sans',sans-serif;transform:scaleX(0.8692);">Graph Window</span>
<span class="t" id="t78" style="left:210.00px;top:187.31px;font-size:6.9px;color:#fff;font-family:'Liberation Mono',monospace;transform:scaleX(1.0500);">mV [DC]</span>
<span class="t" id="t79" style="left:353.00px;top:188.00px;font-size:9.3px;color:#fff;font-family:'Liberation Sans',sans-serif;transform:scaleX(1.0619);">Graph Title</span>
<span class="t" id="t80" style="left:190.00px;top:198.80px;font-size:5px;color:#e0e0e0;font-family:'Liberation Mono',monospace;transform:scaleX(0.8327);-webkit-text-stroke:0;">322.800</span>
<span class="t" id="t81" style="left:190.00px;top:216.01px;font-size:5px;color:#e0e0e0;font-family:'Liberation Mono',monospace;transform:scaleX(0.8327);-webkit-text-stroke:0;">322.400</span>
<span class="t" id="t82" style="left:190.00px;top:233.21px;font-size:5px;color:#e0e0e0;font-family:'Liberation Mono',monospace;transform:scaleX(0.8327);-webkit-text-stroke:0;">322.000</span>
<span class="t" id="t83" style="left:190.00px;top:250.41px;font-size:5px;color:#e0e0e0;font-family:'Liberation Mono',monospace;transform:scaleX(0.8327);-webkit-text-stroke:0;">321.600</span>
<span class="t" id="t84" style="left:190.00px;top:267.60px;font-size:5px;color:#e0e0e0;font-family:'Liberation Mono',monospace;transform:scaleX(0.8327);-webkit-text-stroke:0;">321.200</span>
<span class="t" id="t85" style="left:190.00px;top:284.80px;font-size:5px;color:#e0e0e0;font-family:'Liberation Mono',monospace;transform:scaleX(0.8327);-webkit-text-stroke:0;">320.800</span>
<span class="t" id="t86" style="left:190.00px;top:302.01px;font-size:5px;color:#e0e0e0;font-family:'Liberation Mono',monospace;transform:scaleX(0.8327);-webkit-text-stroke:0;">320.400</span>
<span class="t" id="t87" style="left:190.00px;top:319.21px;font-size:5px;color:#e0e0e0;font-family:'Liberation Mono',monospace;transform:scaleX(0.8327);-webkit-text-stroke:0;">320.000</span>
<span class="t" id="t88" style="left:190.00px;top:336.41px;font-size:5px;color:#e0e0e0;font-family:'Liberation Mono',monospace;transform:scaleX(0.8327);-webkit-text-stroke:0;">319.600</span>
<span class="t" id="t89" style="left:206.50px;top:340.40px;font-size:4.8px;color:#e0e0e0;font-family:'Liberation Mono',monospace;transform:scaleX(0.8469);-webkit-text-stroke:0;">0m00s</span>
<span class="t" id="t90" style="left:263.34px;top:340.40px;font-size:4.8px;color:#e0e0e0;font-family:'Liberation Mono',monospace;transform:scaleX(0.8469);-webkit-text-stroke:0;">0m10s</span>
<span class="t" id="t91" style="left:320.18px;top:340.40px;font-size:4.8px;color:#e0e0e0;font-family:'Liberation Mono',monospace;transform:scaleX(0.8469);-webkit-text-stroke:0;">0m20s</span>
<span class="t" id="t92" style="left:377.02px;top:340.40px;font-size:4.8px;color:#e0e0e0;font-family:'Liberation Mono',monospace;transform:scaleX(0.8469);-webkit-text-stroke:0;">0m30s</span>
<span class="t" id="t93" style="left:433.86px;top:340.40px;font-size:4.8px;color:#e0e0e0;font-family:'Liberation Mono',monospace;transform:scaleX(0.8469);-webkit-text-stroke:0;">0m40s</span>
<span class="t" id="t94" style="left:490.70px;top:340.40px;font-size:4.8px;color:#e0e0e0;font-family:'Liberation Mono',monospace;transform:scaleX(0.8469);-webkit-text-stroke:0;">0m50s</span>
<span class="t" id="t95" style="left:547.54px;top:340.40px;font-size:4.8px;color:#e0e0e0;font-family:'Liberation Mono',monospace;transform:scaleX(0.8469);-webkit-text-stroke:0;">0m60s</span>
<span class="t" id="t96" style="left:213.50px;top:205.00px;font-size:8.3px;color:#f04010;font-family:'Liberation Serif',serif;transform:scaleX(0.8542);">Max</span>
<span class="t" id="t97" style="left:213.00px;top:230.00px;font-size:7.2px;color:#e0a020;font-family:'Liberation Serif',serif;transform:scaleX(0.9530);">Avg.</span>
<span class="t" id="t98" style="left:213.00px;top:309.01px;font-size:7.6px;color:#f04010;font-family:'Liberation Serif',serif;transform:scaleX(1.1048);">Min</span>
<span class="t" id="t99" style="left:362.00px;top:346.61px;font-size:6.3px;color:#fff;font-family:'Liberation Serif',serif;transform:scaleX(0.9693);">Elapsed time</span>
<span class="t" id="t100" style="left:195.70px;top:347.21px;font-size:3px;color:#999;font-family:'Liberation Mono',monospace;transform:scaleX(1.0750);">Max: 322.800  19/01/01 00:00:07</span>
<span class="t" id="t101" style="left:195.70px;top:350.80px;font-size:3px;color:#999;font-family:'Liberation Mono',monospace;transform:scaleX(1.0750);">Min: 320.300  19/01/01 00:00:18</span>
<span class="t" id="t102" style="left:195.70px;top:354.41px;font-size:3px;color:#999;font-family:'Liberation Mono',monospace;transform:scaleX(1.0458);">Avg: 321.935</span>
<span class="t" id="t103" style="left:233.50px;top:358.01px;font-size:3px;color:#555;font-family:'Liberation Mono',monospace;transform:scaleX(1.0088);">Now: 320.300</span>
<span class="t" id="t104" style="left:184.50px;top:366.31px;font-size:8px;color:#000;font-family:'Liberation Sans',sans-serif;font-weight:bold;transform:scaleX(0.7401);">Log.</span>
<span class="t" id="t105" style="left:220.50px;top:366.31px;font-size:8px;color:#a4a4a4;font-family:'Liberation Sans',sans-serif;transform:scaleX(0.8745);text-shadow:0.6px 0.6px 0 #fff;">Overlap</span>
<span class="t" id="t106" style="left:264.50px;top:366.31px;font-size:8px;color:#a4a4a4;font-family:'Liberation Sans',sans-serif;transform:scaleX(0.8501);text-shadow:0.6px 0.6px 0 #fff;">Arrange</span>
<span class="t" id="t107" style="left:321.30px;top:366.31px;font-size:8px;color:#000;font-family:'Liberation Sans',sans-serif;transform:scaleX(0.8091);">Liner</span>
<span class="t" id="t108" style="left:357.00px;top:366.31px;font-size:8px;color:#000;font-family:'Liberation Sans',sans-serif;transform:scaleX(0.8432);">Bar</span>
<span class="t" id="t109" style="left:385.50px;top:366.31px;font-size:8px;color:#000;font-family:'Liberation Sans',sans-serif;transform:scaleX(0.9290);">A-Bar</span>
<span class="t" id="t110" style="left:423.80px;top:366.31px;font-size:8px;color:#000;font-family:'Liberation Sans',sans-serif;transform:scaleX(0.8994);">Dot</span>
<span class="t" id="t111" style="left:453.80px;top:366.31px;font-size:8px;color:#000;font-family:'Liberation Sans',sans-serif;transform:scaleX(0.9089);">Curve</span>
<span class="t" id="t112" style="left:503.80px;top:366.31px;font-size:8px;color:#000;font-family:'Liberation Sans',sans-serif;transform:scaleX(0.9694);">X-A Date Time</span>
<span class="t" id="t113" style="left:4.70px;top:394.31px;font-size:8.5px;color:#fff;font-family:'Liberation Sans',sans-serif;transform:scaleX(0.8181);">0:00'17"93</span>
<span class="t" id="t114" style="left:48.30px;top:394.31px;font-size:8.5px;color:#fff;font-family:'Liberation Sans',sans-serif;transform:scaleX(0.8296);">Main:[DC] 320.300mV,</span>
<span class="t" id="t115" style="left:130.30px;top:394.31px;font-size:8.5px;color:#fff;font-family:'Liberation Sans',sans-serif;transform:scaleX(0.8787);">Memory capacity [ 32674points / 99% ]</span>
<span class="t" id="t116" style="left:562.70px;top:395.01px;font-size:8.5px;color:#222;font-family:'Liberation Sans',sans-serif;transform:scaleX(0.8878);">Ver.14.1.3</span>
</div>
</body></html>
